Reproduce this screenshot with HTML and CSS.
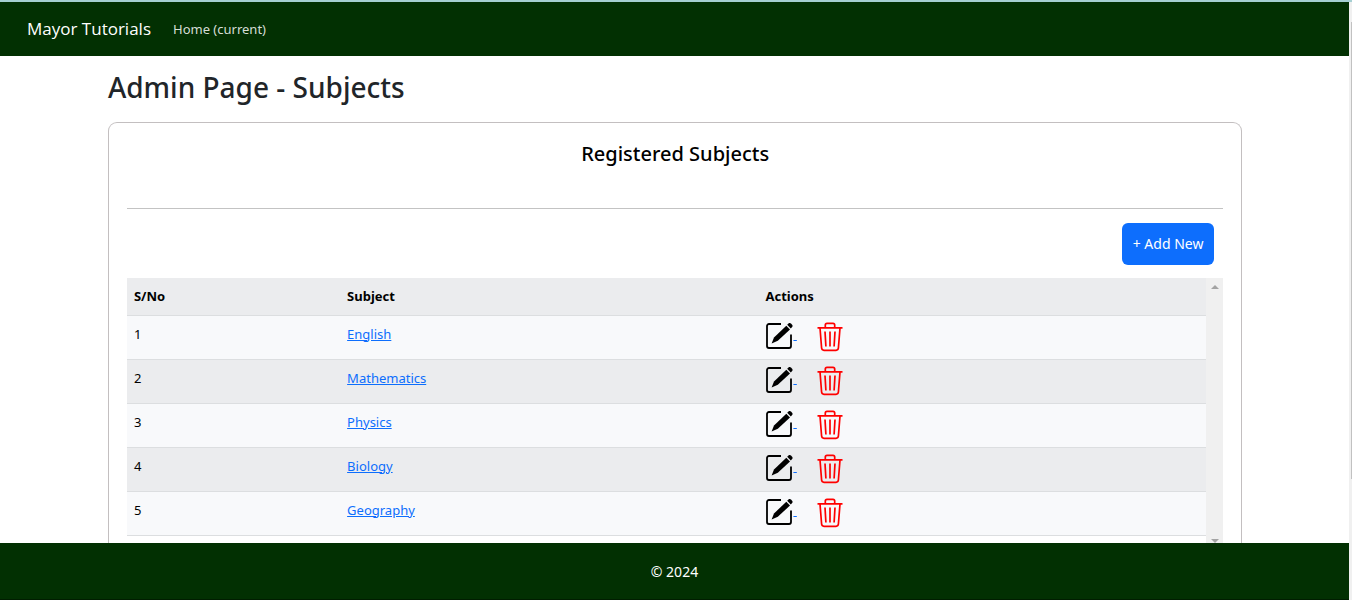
FILE: index.html
```html
<!DOCTYPE html>
<html lang="en">
<head>
<meta charset="utf-8">
<title>Mayor Tutorials - Subjects</title>
<link rel="stylesheet" href="styles.css">
</head>
<body>
<svg class="sprite" aria-hidden="true">
  <symbol id="edit" viewBox="0 0 28 28">
    <path d="M16 2H4A2 2 0 0 0 2 4V24A2 2 0 0 0 4 26H24A2 2 0 0 0 26 24V12.500" fill="none" stroke="#000" stroke-width="1.800"/>
    <path d="M21.300 3.700L25 7.500 12.800 18.800 6.600 21.600 9 15.500Z" fill="#000"/>
    <path d="M22.200 2.800L24 1.100Q25 .5 26 1.500L27.300 2.900Q28 4 27.300 4.800L25.800 6.500Z" fill="#000"/>
  </symbol>
  <symbol id="trash" viewBox="0 0 26 30">
    <path d="M.5 5.800H25.500M8.300 5.500V3A1.700 1.700 0 0 1 10 1.300H16A1.700 1.700 0 0 1 17.700 3V5.500M3 6L4.600 26A2.500 2.500 0 0 0 7 28.300H19A2.500 2.500 0 0 0 21.400 26L23 6M8 9.500L8.900 24.500M13 9.500V24.500M18 9.500L17.100 24.500" fill="none" stroke="#f00" stroke-width="1.700"/>
  </symbol>
</svg>
<div class="window">
  <div class="page">
    <header class="navbar">
      <a class="brand" href="#">Mayor Tutorials</a>
      <nav><a class="nav-link" href="#">Home (current)</a></nav>
    </header>
    <main class="content">
      <h1>Admin Page - Subjects</h1>
      <section class="card">
        <h2>Registered Subjects</h2>
        <hr>
        <div class="toolbar"><button class="add" type="button">+ Add New</button></div>
        <div class="list">
          <table>
            <thead><tr><th class="col-no">S/No</th><th class="col-subject">Subject</th><th>Actions</th></tr></thead>
            <tbody>
              <tr><td>1</td><td><a href="#">English</a></td><td><div class="actions"><a href="#" aria-label="Edit English"><svg class="edit"><use href="#edit"/></svg>&nbsp;</a><button type="button" aria-label="Delete English"><svg class="trash"><use href="#trash"/></svg></button></div></td></tr>
              <tr><td>2</td><td><a href="#">Mathematics</a></td><td><div class="actions"><a href="#" aria-label="Edit Mathematics"><svg class="edit"><use href="#edit"/></svg>&nbsp;</a><button type="button" aria-label="Delete Mathematics"><svg class="trash"><use href="#trash"/></svg></button></div></td></tr>
              <tr><td>3</td><td><a href="#">Physics</a></td><td><div class="actions"><a href="#" aria-label="Edit Physics"><svg class="edit"><use href="#edit"/></svg>&nbsp;</a><button type="button" aria-label="Delete Physics"><svg class="trash"><use href="#trash"/></svg></button></div></td></tr>
              <tr><td>4</td><td><a href="#">Biology</a></td><td><div class="actions"><a href="#" aria-label="Edit Biology"><svg class="edit"><use href="#edit"/></svg>&nbsp;</a><button type="button" aria-label="Delete Biology"><svg class="trash"><use href="#trash"/></svg></button></div></td></tr>
              <tr><td>5</td><td><a href="#">Geography</a></td><td><div class="actions"><a href="#" aria-label="Edit Geography"><svg class="edit"><use href="#edit"/></svg>&nbsp;</a><button type="button" aria-label="Delete Geography"><svg class="trash"><use href="#trash"/></svg></button></div></td></tr>
            </tbody>
          </table>
          <div class="scrollbar" aria-hidden="true">
            <svg viewBox="0 0 8 4"><path d="M4 0L8 4H0Z"/></svg>
            <svg viewBox="0 0 8 4"><path d="M0 0H8L4 4Z"/></svg>
          </div>
        </div>
      </section>
    </main>
    <footer>© 2024</footer>
  </div>
  <div class="page-scroll" aria-hidden="true"><div class="thumb"></div></div>
</div>
</body>
</html>
```
FILE: styles.css
```css
* { box-sizing: border-box; }
body {
  margin: 0;
  font: 13px/20px "Segoe UI", "Noto Sans", "Open Sans", sans-serif;
  color: #000;
  background: #fff;
}
a { color: #0d6efd; }
button { font: inherit; cursor: pointer; }
.sprite { display: none; }
.window {
  display: flex;
  height: 100vh;
  border-top: 2px solid #a5cfd2;
}
.page {
  flex: 1;
  min-width: 0;
  display: flex;
  flex-direction: column;
}
.navbar {
  flex: none;
  display: flex;
  align-items: center;
  gap: 22px;
  height: 54px;
  padding: 0 27px;
  background: #023002;
}
.brand {
  font-family: "Segoe UI", "Open Sans", sans-serif;
  font-size: 17px;
  line-height: 24px;
  color: #fff;
  text-decoration: none;
}
.nav-link { color: #d5ddd5; text-decoration: none; }
.content {
  flex: 1;
  min-height: 0;
  display: flex;
  flex-direction: column;
  padding: 13px 7.9% 0 8%;
  overflow: hidden;
}
h1 {
  margin: 0 0 17px;
  font-size: 28px;
  line-height: 36px;
  font-weight: 500;
  color: #212529;
}
.card {
  flex: 1;
  min-height: 0;
  display: flex;
  flex-direction: column;
  padding: 17px 18px 0;
  border: 1px solid #c3bfc0;
  border-bottom: 0;
  border-radius: 9px 9px 0 0;
}
h2 {
  margin: 0;
  font-size: 20px;
  line-height: 28px;
  font-weight: 500;
  text-align: center;
}
hr {
  width: 100%;
  margin: 40px 0 14px;
  border: 0;
  border-top: 1px solid #c3c3c3;
}
.toolbar {
  display: flex;
  justify-content: flex-end;
  padding: 0 9px 13px;
}
.add {
  height: 42px;
  padding: 0 11px;
  border: 0;
  border-radius: 6px;
  color: #fff;
  background: #0d6efd;
  font-size: 14px;
}
.list {
  flex: 1;
  min-height: 0;
  display: flex;
  align-items: stretch;
  overflow: hidden;
}
table {
  flex: 1;
  align-self: flex-start;
  table-layout: fixed;
  border-collapse: collapse;
}
.col-no { width: 19.75%; }
.col-subject { width: 38.75%; }
th, td {
  padding: 8px 7px 0;
  border-bottom: 1px solid #dcdee0;
  text-align: left;
  vertical-align: top;
}
th { height: 37px; font-weight: 700; background: #ebecee; }
td { height: 44px; background: #f8f9fb; }
td:last-child { padding: 6px 7px 0; }
tbody tr:nth-child(even) td { background: #ebecee; }
.actions { display: flex; align-items: flex-start; gap: 20px; }
.actions button { padding: 0; border: 0; background: none; }
.edit { width: 28px; height: 28px; vertical-align: -11px; }
.trash { display: block; width: 26px; height: 30px; }
.scrollbar {
  width: 17px;
  display: flex;
  flex-direction: column;
  justify-content: space-between;
  align-items: center;
  padding-top: 7px;
  background: #f0f0f0;
}
.scrollbar svg { width: 8px; height: 4px; fill: #a3a3a3; }
footer {
  flex: none;
  padding: 19px 0 17px;
  text-align: center;
  font-size: 14px;
  color: #fff;
  background: #023002;
  border-bottom: 1px solid #001d00;
}
.page-scroll {
  width: 3px;
  padding: 20px 0 0 2px;
  background: #f0f0f0;
}
.thumb { height: 79%; background: #c1c1c1; }
```
